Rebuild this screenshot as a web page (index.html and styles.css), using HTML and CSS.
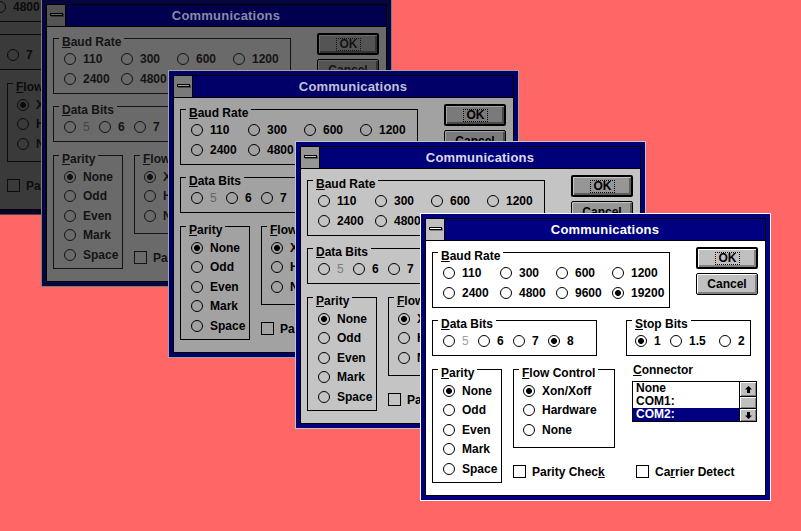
FILE: index.html
```html
<!DOCTYPE html>
<html>
<head>
<meta charset="utf-8">
<link rel="stylesheet" href="styles.css">
</head>
<body>

<div class="win w0">
  <div class="inner">
    <div class="titlebar"><div class="sysbox"><span class="sysbar"></span></div><div class="title">Communications</div></div>
    <div class="client">
      <div class="row">
        <div class="group baud">
          <div class="legend"><u>B</u>aud Rate</div>
          <div class="opts baudopts">
            <div class="radio"><span class="rb"></span>110</div><div class="radio"><span class="rb"></span>300</div><div class="radio"><span class="rb"></span>600</div><div class="radio"><span class="rb"></span>1200</div>
            <div class="radio"><span class="rb"></span>2400</div><div class="radio"><span class="rb"></span>4800</div><div class="radio"><span class="rb"></span>9600</div><div class="radio"><span class="rb on"></span>19200</div>
          </div>
        </div>
        <div class="buttons"><div class="btn def"><span class="focus">OK</span></div><div class="btn">Cancel</div></div>
      </div>
      <div class="row r2">
        <div class="group data">
          <div class="legend"><u>D</u>ata Bits</div>
          <div class="opts dataopts"><div class="radio"><span class="rb"></span><span class="dis">5</span></div><div class="radio"><span class="rb"></span>6</div><div class="radio"><span class="rb"></span>7</div><div class="radio"><span class="rb on"></span>8</div></div>
        </div>
        <div class="group stop">
          <div class="legend"><u>S</u>top Bits</div>
          <div class="opts stopopts"><div class="radio"><span class="rb on"></span>1</div><div class="radio"><span class="rb"></span>1.5</div><div class="radio"><span class="rb"></span>2</div></div>
        </div>
      </div>
      <div class="row r3">
        <div class="group parity">
          <div class="legend"><u>P</u>arity</div>
          <div class="opts col"><div class="radio"><span class="rb on"></span>None</div><div class="radio"><span class="rb"></span>Odd</div><div class="radio"><span class="rb"></span>Even</div><div class="radio"><span class="rb"></span>Mark</div><div class="radio"><span class="rb"></span>Space</div></div>
        </div>
        <div class="r3grid">
          <div class="group flow">
            <div class="legend"><u>F</u>low Control</div>
            <div class="opts col flowopts"><div class="radio"><span class="rb on"></span>Xon/Xoff</div><div class="radio"><span class="rb"></span>Hardware</div><div class="radio"><span class="rb"></span>None</div></div>
          </div>
          <div class="conn">
            <div class="connlabel"><u>C</u>onnector</div>
            <div class="listbox">
              <div class="items"><div>None</div><div>COM1:</div><div class="sel">COM2:</div></div>
              <div class="vscroll">
                <div class="sb up"><svg width="7" height="7" viewBox="0 0 7 7"><polygon points="3.5,0 7,3.5 5,3.5 5,7 2,7 2,3.5 0,3.5"/></svg></div>
                <div class="sb thumb"></div>
                <div class="sb down"><svg width="7" height="7" viewBox="0 0 7 7"><polygon points="3.5,7 7,3.5 5,3.5 5,0 2,0 2,3.5 0,3.5"/></svg></div>
              </div>
            </div>
          </div>
          <div class="check"><span class="box"></span><span>Parity Chec<u>k</u></span></div>
          <div class="check cd"><span class="box"></span><span>Ca<u>r</u>rier Detect</span></div>
        </div>
      </div>
    </div>
  </div>
</div>

<div class="win w1">
  <div class="inner">
    <div class="titlebar"><div class="sysbox"><span class="sysbar"></span></div><div class="title">Communications</div></div>
    <div class="client">
      <div class="row">
        <div class="group baud">
          <div class="legend"><u>B</u>aud Rate</div>
          <div class="opts baudopts">
            <div class="radio"><span class="rb"></span>110</div><div class="radio"><span class="rb"></span>300</div><div class="radio"><span class="rb"></span>600</div><div class="radio"><span class="rb"></span>1200</div>
            <div class="radio"><span class="rb"></span>2400</div><div class="radio"><span class="rb"></span>4800</div><div class="radio"><span class="rb"></span>9600</div><div class="radio"><span class="rb on"></span>19200</div>
          </div>
        </div>
        <div class="buttons"><div class="btn def"><span class="focus">OK</span></div><div class="btn">Cancel</div></div>
      </div>
      <div class="row r2">
        <div class="group data">
          <div class="legend"><u>D</u>ata Bits</div>
          <div class="opts dataopts"><div class="radio"><span class="rb"></span><span class="dis">5</span></div><div class="radio"><span class="rb"></span>6</div><div class="radio"><span class="rb"></span>7</div><div class="radio"><span class="rb on"></span>8</div></div>
        </div>
        <div class="group stop">
          <div class="legend"><u>S</u>top Bits</div>
          <div class="opts stopopts"><div class="radio"><span class="rb on"></span>1</div><div class="radio"><span class="rb"></span>1.5</div><div class="radio"><span class="rb"></span>2</div></div>
        </div>
      </div>
      <div class="row r3">
        <div class="group parity">
          <div class="legend"><u>P</u>arity</div>
          <div class="opts col"><div class="radio"><span class="rb on"></span>None</div><div class="radio"><span class="rb"></span>Odd</div><div class="radio"><span class="rb"></span>Even</div><div class="radio"><span class="rb"></span>Mark</div><div class="radio"><span class="rb"></span>Space</div></div>
        </div>
        <div class="r3grid">
          <div class="group flow">
            <div class="legend"><u>F</u>low Control</div>
            <div class="opts col flowopts"><div class="radio"><span class="rb on"></span>Xon/Xoff</div><div class="radio"><span class="rb"></span>Hardware</div><div class="radio"><span class="rb"></span>None</div></div>
          </div>
          <div class="conn">
            <div class="connlabel"><u>C</u>onnector</div>
            <div class="listbox">
              <div class="items"><div>None</div><div>COM1:</div><div class="sel">COM2:</div></div>
              <div class="vscroll">
                <div class="sb up"><svg width="7" height="7" viewBox="0 0 7 7"><polygon points="3.5,0 7,3.5 5,3.5 5,7 2,7 2,3.5 0,3.5"/></svg></div>
                <div class="sb thumb"></div>
                <div class="sb down"><svg width="7" height="7" viewBox="0 0 7 7"><polygon points="3.5,7 7,3.5 5,3.5 5,0 2,0 2,3.5 0,3.5"/></svg></div>
              </div>
            </div>
          </div>
          <div class="check"><span class="box"></span><span>Parity Chec<u>k</u></span></div>
          <div class="check cd"><span class="box"></span><span>Ca<u>r</u>rier Detect</span></div>
        </div>
      </div>
    </div>
  </div>
</div>

<div class="win w2">
  <div class="inner">
    <div class="titlebar"><div class="sysbox"><span class="sysbar"></span></div><div class="title">Communications</div></div>
    <div class="client">
      <div class="row">
        <div class="group baud">
          <div class="legend"><u>B</u>aud Rate</div>
          <div class="opts baudopts">
            <div class="radio"><span class="rb"></span>110</div><div class="radio"><span class="rb"></span>300</div><div class="radio"><span class="rb"></span>600</div><div class="radio"><span class="rb"></span>1200</div>
            <div class="radio"><span class="rb"></span>2400</div><div class="radio"><span class="rb"></span>4800</div><div class="radio"><span class="rb"></span>9600</div><div class="radio"><span class="rb on"></span>19200</div>
          </div>
        </div>
        <div class="buttons"><div class="btn def"><span class="focus">OK</span></div><div class="btn">Cancel</div></div>
      </div>
      <div class="row r2">
        <div class="group data">
          <div class="legend"><u>D</u>ata Bits</div>
          <div class="opts dataopts"><div class="radio"><span class="rb"></span><span class="dis">5</span></div><div class="radio"><span class="rb"></span>6</div><div class="radio"><span class="rb"></span>7</div><div class="radio"><span class="rb on"></span>8</div></div>
        </div>
        <div class="group stop">
          <div class="legend"><u>S</u>top Bits</div>
          <div class="opts stopopts"><div class="radio"><span class="rb on"></span>1</div><div class="radio"><span class="rb"></span>1.5</div><div class="radio"><span class="rb"></span>2</div></div>
        </div>
      </div>
      <div class="row r3">
        <div class="group parity">
          <div class="legend"><u>P</u>arity</div>
          <div class="opts col"><div class="radio"><span class="rb on"></span>None</div><div class="radio"><span class="rb"></span>Odd</div><div class="radio"><span class="rb"></span>Even</div><div class="radio"><span class="rb"></span>Mark</div><div class="radio"><span class="rb"></span>Space</div></div>
        </div>
        <div class="r3grid">
          <div class="group flow">
            <div class="legend"><u>F</u>low Control</div>
            <div class="opts col flowopts"><div class="radio"><span class="rb on"></span>Xon/Xoff</div><div class="radio"><span class="rb"></span>Hardware</div><div class="radio"><span class="rb"></span>None</div></div>
          </div>
          <div class="conn">
            <div class="connlabel"><u>C</u>onnector</div>
            <div class="listbox">
              <div class="items"><div>None</div><div>COM1:</div><div class="sel">COM2:</div></div>
              <div class="vscroll">
                <div class="sb up"><svg width="7" height="7" viewBox="0 0 7 7"><polygon points="3.5,0 7,3.5 5,3.5 5,7 2,7 2,3.5 0,3.5"/></svg></div>
                <div class="sb thumb"></div>
                <div class="sb down"><svg width="7" height="7" viewBox="0 0 7 7"><polygon points="3.5,7 7,3.5 5,3.5 5,0 2,0 2,3.5 0,3.5"/></svg></div>
              </div>
            </div>
          </div>
          <div class="check"><span class="box"></span><span>Parity Chec<u>k</u></span></div>
          <div class="check cd"><span class="box"></span><span>Ca<u>r</u>rier Detect</span></div>
        </div>
      </div>
    </div>
  </div>
</div>

<div class="win w3">
  <div class="inner">
    <div class="titlebar"><div class="sysbox"><span class="sysbar"></span></div><div class="title">Communications</div></div>
    <div class="client">
      <div class="row">
        <div class="group baud">
          <div class="legend"><u>B</u>aud Rate</div>
          <div class="opts baudopts">
            <div class="radio"><span class="rb"></span>110</div><div class="radio"><span class="rb"></span>300</div><div class="radio"><span class="rb"></span>600</div><div class="radio"><span class="rb"></span>1200</div>
            <div class="radio"><span class="rb"></span>2400</div><div class="radio"><span class="rb"></span>4800</div><div class="radio"><span class="rb"></span>9600</div><div class="radio"><span class="rb on"></span>19200</div>
          </div>
        </div>
        <div class="buttons"><div class="btn def"><span class="focus">OK</span></div><div class="btn">Cancel</div></div>
      </div>
      <div class="row r2">
        <div class="group data">
          <div class="legend"><u>D</u>ata Bits</div>
          <div class="opts dataopts"><div class="radio"><span class="rb"></span><span class="dis">5</span></div><div class="radio"><span class="rb"></span>6</div><div class="radio"><span class="rb"></span>7</div><div class="radio"><span class="rb on"></span>8</div></div>
        </div>
        <div class="group stop">
          <div class="legend"><u>S</u>top Bits</div>
          <div class="opts stopopts"><div class="radio"><span class="rb on"></span>1</div><div class="radio"><span class="rb"></span>1.5</div><div class="radio"><span class="rb"></span>2</div></div>
        </div>
      </div>
      <div class="row r3">
        <div class="group parity">
          <div class="legend"><u>P</u>arity</div>
          <div class="opts col"><div class="radio"><span class="rb on"></span>None</div><div class="radio"><span class="rb"></span>Odd</div><div class="radio"><span class="rb"></span>Even</div><div class="radio"><span class="rb"></span>Mark</div><div class="radio"><span class="rb"></span>Space</div></div>
        </div>
        <div class="r3grid">
          <div class="group flow">
            <div class="legend"><u>F</u>low Control</div>
            <div class="opts col flowopts"><div class="radio"><span class="rb on"></span>Xon/Xoff</div><div class="radio"><span class="rb"></span>Hardware</div><div class="radio"><span class="rb"></span>None</div></div>
          </div>
          <div class="conn">
            <div class="connlabel"><u>C</u>onnector</div>
            <div class="listbox">
              <div class="items"><div>None</div><div>COM1:</div><div class="sel">COM2:</div></div>
              <div class="vscroll">
                <div class="sb up"><svg width="7" height="7" viewBox="0 0 7 7"><polygon points="3.5,0 7,3.5 5,3.5 5,7 2,7 2,3.5 0,3.5"/></svg></div>
                <div class="sb thumb"></div>
                <div class="sb down"><svg width="7" height="7" viewBox="0 0 7 7"><polygon points="3.5,7 7,3.5 5,3.5 5,0 2,0 2,3.5 0,3.5"/></svg></div>
              </div>
            </div>
          </div>
          <div class="check"><span class="box"></span><span>Parity Chec<u>k</u></span></div>
          <div class="check cd"><span class="box"></span><span>Ca<u>r</u>rier Detect</span></div>
        </div>
      </div>
    </div>
  </div>
</div>

<div class="win w4">
  <div class="inner">
    <div class="titlebar"><div class="sysbox"><span class="sysbar"></span></div><div class="title">Communications</div></div>
    <div class="client">
      <div class="row">
        <div class="group baud">
          <div class="legend"><u>B</u>aud Rate</div>
          <div class="opts baudopts">
            <div class="radio"><span class="rb"></span>110</div><div class="radio"><span class="rb"></span>300</div><div class="radio"><span class="rb"></span>600</div><div class="radio"><span class="rb"></span>1200</div>
            <div class="radio"><span class="rb"></span>2400</div><div class="radio"><span class="rb"></span>4800</div><div class="radio"><span class="rb"></span>9600</div><div class="radio"><span class="rb on"></span>19200</div>
          </div>
        </div>
        <div class="buttons"><div class="btn def"><span class="focus">OK</span></div><div class="btn">Cancel</div></div>
      </div>
      <div class="row r2">
        <div class="group data">
          <div class="legend"><u>D</u>ata Bits</div>
          <div class="opts dataopts"><div class="radio"><span class="rb"></span><span class="dis">5</span></div><div class="radio"><span class="rb"></span>6</div><div class="radio"><span class="rb"></span>7</div><div class="radio"><span class="rb on"></span>8</div></div>
        </div>
        <div class="group stop">
          <div class="legend"><u>S</u>top Bits</div>
          <div class="opts stopopts"><div class="radio"><span class="rb on"></span>1</div><div class="radio"><span class="rb"></span>1.5</div><div class="radio"><span class="rb"></span>2</div></div>
        </div>
      </div>
      <div class="row r3">
        <div class="group parity">
          <div class="legend"><u>P</u>arity</div>
          <div class="opts col"><div class="radio"><span class="rb on"></span>None</div><div class="radio"><span class="rb"></span>Odd</div><div class="radio"><span class="rb"></span>Even</div><div class="radio"><span class="rb"></span>Mark</div><div class="radio"><span class="rb"></span>Space</div></div>
        </div>
        <div class="r3grid">
          <div class="group flow">
            <div class="legend"><u>F</u>low Control</div>
            <div class="opts col flowopts"><div class="radio"><span class="rb on"></span>Xon/Xoff</div><div class="radio"><span class="rb"></span>Hardware</div><div class="radio"><span class="rb"></span>None</div></div>
          </div>
          <div class="conn">
            <div class="connlabel"><u>C</u>onnector</div>
            <div class="listbox">
              <div class="items"><div>None</div><div>COM1:</div><div class="sel">COM2:</div></div>
              <div class="vscroll">
                <div class="sb up"><svg width="7" height="7" viewBox="0 0 7 7"><polygon points="3.5,0 7,3.5 5,3.5 5,7 2,7 2,3.5 0,3.5"/></svg></div>
                <div class="sb thumb"></div>
                <div class="sb down"><svg width="7" height="7" viewBox="0 0 7 7"><polygon points="3.5,7 7,3.5 5,3.5 5,0 2,0 2,3.5 0,3.5"/></svg></div>
              </div>
            </div>
          </div>
          <div class="check"><span class="box"></span><span>Parity Chec<u>k</u></span></div>
          <div class="check cd"><span class="box"></span><span>Ca<u>r</u>rier Detect</span></div>
        </div>
      </div>
    </div>
  </div>
</div>

</body>
</html>
```

FILE: styles.css
```css
* { box-sizing: border-box; }
html, body { margin: 0; padding: 0; }
body {
  width: 801px;
  height: 531px;
  overflow: hidden;
  position: relative;
  background: #ff6666;
  font: bold 12px/14px "Liberation Sans", Arial, sans-serif;
}

/* per-window palettes (windows fade into the background) */
.w4 { --bg:#ffffff; --face:#c0c0c0; --hi:#ffffff; --sh:#808080; --ink:#000000; --dis:#a0a0a0; --frame:#000080; --title:#000080; --tt:#ffffff; --outer:#ffffff; --sel:#000080; --seltext:#ffffff; left:420px; top:213px; }
.w3 { --bg:#c4c4c4; --face:#969696; --hi:#c4c4c4; --sh:#5e5e5e; --ink:#000000; --dis:#7c7c7c; --frame:#000078; --title:#000078; --tt:#dcdcee; --outer:#c4c4c4; --sel:#000070; --seltext:#c4c4c4; left:295px; top:141px; }
.w2 { --bg:#a2a2a2; --face:#7a7a7a; --hi:#a2a2a2; --sh:#4a4a4a; --ink:#000000; --dis:#626262; --frame:#000068; --title:#000068; --tt:#c2c2da; --outer:#a2a2a2; --sel:#000060; --seltext:#a2a2a2; left:168px; top:70px; }
.w1 { --bg:#6a6a6a; --face:#545454; --hi:#6a6a6a; --sh:#343434; --ink:#141414; --dis:#444444; --frame:#06063e; --title:#00004e; --tt:#8a8aa6; --outer:#7c7c7c; --sel:#00004e; --seltext:#6a6a6a; left:41px; top:-1px; }
.w0 { --bg:#3a3a3a; --face:#2e2e2e; --hi:#3a3a3a; --sh:#202020; --ink:#0c0c0c; --dis:#262626; --frame:#04042a; --title:#00002c; --tt:#4c4c5c; --outer:#464646; --sel:#00002c; --seltext:#3a3a3a; left:-86px; top:-73px; }

.win {
  position: absolute;
  width: 351px;
  height: 288px;
  border: 1px solid var(--outer);
  background: var(--frame);
  padding: 4px;
  display: flex;
  color: var(--ink);
}
.inner {
  flex: 1;
  border: 1px solid #000;
  background: var(--bg);
  display: flex;
  flex-direction: column;
  min-width: 0;
}
.titlebar {
  height: 22px;
  flex: none;
  display: flex;
  background: var(--title);
  border-bottom: 1px solid #000;
}
.sysbox {
  width: 19px;
  flex: none;
  background: var(--face);
  border-right: 1px solid #000;
  display: flex;
  align-items: center;
  justify-content: center;
  padding-bottom: 2px;
}
.sysbar {
  width: 13px;
  height: 3px;
  background: var(--hi);
  border: 1px solid #000;
  box-shadow: 1px 1px 0 var(--sh);
}
.title {
  flex: 1;
  text-align: center;
  color: var(--tt);
  font-size: 13px;
  line-height: 21px;
  letter-spacing: 0.2px;
}

.client {
  flex: 1;
  padding: 6px 0 0 6px;
  display: flex;
  flex-direction: column;
}
.row { display: flex; align-items: flex-start; }
.r2 { margin-top: 12px; }
.r3 { margin-top: 13px; }

.group { border: 1px solid var(--ink); flex: none; }
.legend {
  width: fit-content;
  margin: -4px 0 0 5px;
  padding: 0 3px;
  background: var(--bg);
  line-height: 14px;
  white-space: nowrap;
}
u { text-decoration-thickness: 1px; text-underline-offset: 1px; }

.baud { margin-top: 5px; width: 238px; height: 56px; }
.data { width: 165px; height: 36px; }
.stop { width: 125px; height: 36px; margin-left: 29px; }
.parity { width: 70px; height: 114px; }
.flow { width: 102px; height: 79px; }

.opts { display: grid; padding-left: 10px; }
.baudopts { grid-template-columns: 57px 56px 56px auto; }
.dataopts { grid-template-columns: 35px 35px 35px auto; }
.stopopts { grid-template-columns: 35px 49px auto; padding-left: 8px; }
.col { display: flex; flex-direction: column; padding-top: 1px; }
.col .radio { height: 19.5px; }
.flowopts { padding-left: 9px; }

.radio {
  display: flex;
  align-items: center;
  gap: 7px;
  height: 20px;
  white-space: nowrap;
}
.rb {
  width: 12px;
  height: 12px;
  flex: none;
  border: 1px solid var(--ink);
  border-radius: 50%;
  background: var(--bg);
}
.rb.on { background: radial-gradient(circle, var(--ink) 0 2.6px, var(--bg) 3.3px); }
.dis { color: var(--dis); font-weight: normal; }

.buttons {
  margin-left: 26px;
  width: 62px;
  display: flex;
  flex-direction: column;
  gap: 4px;
}
.btn {
  height: 22px;
  border: 1px solid #000;
  border-radius: 2px;
  background: var(--face);
  box-shadow: inset 1px 1px 0 var(--hi), inset -2px -2px 0 var(--sh);
  display: flex;
  align-items: center;
  justify-content: center;
  line-height: 14px;
}
.btn.def { border-width: 2px; }
.focus {
  border: 1px dotted var(--ink);
  padding: 0 2px 0 3px;
  line-height: 11px;
}

.r3grid {
  margin-left: 11px;
  display: grid;
  grid-template-columns: 102px 125px;
  column-gap: 17px;
  row-gap: 16px;
  align-items: start;
}
.connlabel { margin-top: -6px; padding-left: 1px; line-height: 14px; }
.listbox {
  margin-top: 4px;
  width: 125px;
  height: 41px;
  border: 1px solid var(--ink);
  background: var(--bg);
  display: flex;
}
.items { flex: 1; }
.items div { height: 13px; line-height: 13px; padding-left: 3px; }
.items .sel { background: var(--sel); color: var(--seltext); }
.vscroll {
  width: 17px;
  flex: none;
  border-left: 1px solid var(--ink);
  display: flex;
  flex-direction: column;
}
.sb {
  background: var(--face);
  box-shadow: inset 1px 1px 0 var(--hi), inset -1px -1px 0 var(--sh);
  display: flex;
  align-items: center;
  justify-content: center;
}
.sb svg { fill: var(--ink); display: block; }
.up { height: 15px; border-bottom: 1px solid var(--ink); }
.thumb { height: 11px; }
.down { flex: 1; border-top: 1px solid var(--ink); }

.check {
  display: flex;
  align-items: center;
  gap: 6px;
  height: 15px;
  white-space: nowrap;
}
.check .box {
  width: 13px;
  height: 13px;
  flex: none;
  border: 1px solid var(--ink);
  background: var(--bg);
}
.cd { margin-left: 4px; }
```
